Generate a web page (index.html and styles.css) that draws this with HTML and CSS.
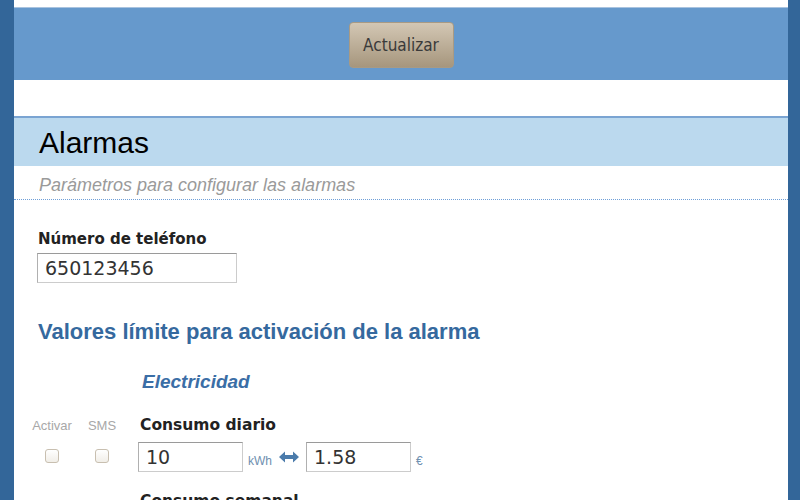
FILE: index.html
```html
<!DOCTYPE html>
<html lang="es">
<head>
  <meta charset="UTF-8" />
  <title>Alarmas</title>
  <link rel="stylesheet" href="styles.css">
</head>
<body>
  <div class="page">
    <div class="prev-end"></div>

    <div class="update-bar">
      <button class="btn-update">Actualizar</button>
    </div>

    <!-- Alarmas -->
    <div class="section">
      <div class="section-title">Alarmas</div>
      <div class="section-desc">Parámetros para configurar las alarmas</div>

      <div class="section-body">
        <div class="field">
          <label>Número de teléfono</label>
          <input type="text" class="txt phone" value="650123456">
        </div>

        <h3 class="limits-title">Valores límite para activación de la alarma</h3>

        <div class="group-title">Electricidad</div>

        <div class="limit-row">
          <div class="check-col">
            <span class="check-label">Activar</span>
            <input type="checkbox" class="chk">
          </div>
          <div class="check-col">
            <span class="check-label">SMS</span>
            <input type="checkbox" class="chk">
          </div>
          <div class="limit-field">
            <label>Consumo diario</label>
            <div class="limit-inputs">
              <input type="text" class="txt small" value="10">
              <span class="unit">kWh</span>
              <svg class="swap" width="20" height="12" viewBox="0 0 20 12">
                <path d="M0 6 L6 0.5 L6 4 L14 4 L14 0.5 L20 6 L14 11.5 L14 8 L6 8 L6 11.5 Z" fill="#4b7bab"/>
              </svg>
              <input type="text" class="txt small" value="1.58">
              <span class="unit">€</span>
            </div>
          </div>
        </div>

        <div class="limit-row">
          <div class="check-col"></div>
          <div class="check-col"></div>
          <div class="limit-field">
            <label>Consumo semanal</label>
          </div>
        </div>
      </div>
    </div>
  </div>
</body>
</html>
```

FILE: styles.css
```css
body {
  margin: 0;
  background-color: #336699;
  font-family: 'Liberation Sans', Arial, sans-serif;
}

.page {
  margin: 0 12px 0 14px;
  background: white;
  min-height: 520px;
}

.prev-end {
  height: 7px;
}

.update-bar {
  border-top: 1px solid #a9c3df;
  background-color: #6699cc;
  height: 72px;
  display: flex;
  justify-content: center;
  align-items: center;
  margin-bottom: 36px;
}

.btn-update {
  width: 105px;
  height: 46px;
  margin-top: 1px;
  font-family: 'DejaVu Sans Condensed', 'DejaVu Sans', sans-serif;
  font-size: 17px;
  color: #3a3a3a;
  background: linear-gradient(#d3c7b4, #a6967d);
  border: 1px solid #a89a84;
  border-radius: 4px;
  cursor: pointer;
}

.section {
  border-top: 2px solid #7aa4d2;
}

.section-title {
  background-color: #bbd9ee;
  height: 48px;
  line-height: 50px;
  padding-left: 25px;
  font-size: 30px;
  color: #000;
}

.section-desc {
  padding: 9px 25px 3px;
  font-size: 18px;
  font-style: italic;
  color: #9a9a9a;
  border-bottom: 1px dotted #6f9fd8;
}

.section-body {
  padding: 30px 24px 0;
}

.field label,
.limit-field label {
  display: block;
  font-family: 'DejaVu Sans', sans-serif;
  font-weight: bold;
  font-size: 15px;
  color: #222;
  margin-bottom: 5px;
}

.limit-field label {
  font-size: 15.5px;
  margin-bottom: 8px;
  padding-left: 2px;
}

.txt {
  box-sizing: border-box;
  height: 30px;
  padding: 0 7px;
  border: 1px solid #cccccc;
  border-top-color: #9a9a9a;
  border-left-color: #b0b0b0;
  font-family: 'DejaVu Sans', sans-serif;
  font-size: 19px;
  color: #333;
}

.phone {
  width: 200px;
  margin-left: -1px;
}

.limits-title {
  margin: 36px 0 0;
  font-size: 22px;
  font-weight: bold;
  color: #35699e;
}

.group-title {
  margin: 26px 0 0 104px;
  font-size: 19px;
  font-weight: bold;
  font-style: italic;
  color: #3b6ea6;
}

.limit-row {
  display: flex;
  margin-top: 23px;
  margin-left: -11px;
}

.limit-row + .limit-row {
  margin-top: 20px;
}

.check-col {
  display: flex;
  flex-direction: column;
  align-items: center;
  width: 50px;
}

.check-label {
  font-size: 13px;
  color: #a8a8a8;
  margin-top: 2px;
}

.chk {
  appearance: none;
  width: 14px;
  height: 14px;
  margin: 16px 0 0;
  border: 1px solid #c8bfb0;
  border-radius: 3px;
  background: linear-gradient(#ffffff, #f1eee8);
}

.limit-field {
  margin-left: 11px;
}

.limit-inputs {
  display: flex;
  align-items: center;
}

.limit-inputs .small {
  width: 105px;
}

.unit {
  font-size: 12px;
  color: #6f8fb0;
  margin: 8px 7px 0 5px;
}

.swap {
  margin: 0 7px 0 0;
}
```
